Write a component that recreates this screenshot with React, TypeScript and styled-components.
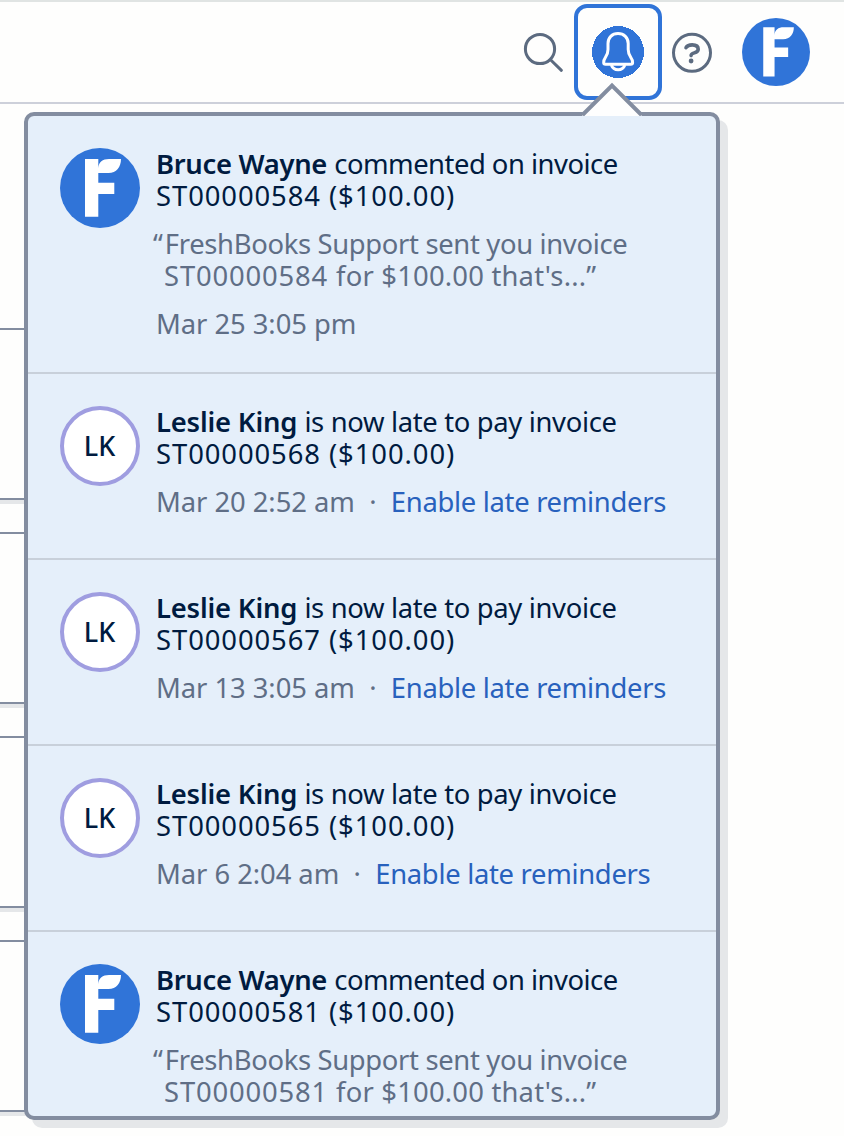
import React from "react";
import styled, { createGlobalStyle } from "styled-components";

const GlobalStyle = createGlobalStyle`
  * { box-sizing: border-box; }
  html, body { margin: 0; padding: 0; }
  body {
    background: #fefefd;
    color: #001b40;
    font-family: "Noto Sans", "Open Sans", sans-serif;
    overflow: hidden;
  }
`;

const Page = styled.div`
  position: relative;
  width: 844px;
  height: 1136px;
  overflow: hidden;
`;

const Header = styled.header`
  display: flex;
  align-items: center;
  justify-content: flex-end;
  height: 104px;
  padding-right: 34px;
  border-top: 2px solid #e0e4e3;
  border-bottom: 2px solid #cdd0da;
`;

const IconButton = styled.button`
  display: flex;
  width: 40px;
  height: 40px;
  padding: 0;
  border: 0;
  background: none;
  color: #5c6b80;

  svg {
    overflow: visible;
  }
`;

const BellButton = styled.button`
  display: flex;
  align-items: center;
  justify-content: center;
  width: 88px;
  height: 96px;
  margin: 0 10px;
  padding: 0;
  border: 4px solid #3074d8;
  border-radius: 13px;
  background: #fefefd;
`;

const AccountButton = styled(IconButton)`
  width: 68px;
  height: 68px;
  margin-left: 30px;
`;

const CardColumn = styled.main`
  display: flex;
  flex-direction: column;
  gap: 32px;
  width: 100px;
  margin-left: -60px;
  padding-top: 224px;
`;

const Card = styled.section`
  height: 172px;
  border: 2px solid #838da0;
  border-radius: 8px;
  box-shadow: 0 4px 0 #e5e7e9;
`;

const Popover = styled.aside`
  position: absolute;
  top: 112px;
  left: 24px;
  width: 696px;
  height: 1008px;
  border: 4px solid #838da0;
  border-radius: 10px;
  background: #e5effa;
  box-shadow: 8px 8px 0 #e5e7e9;
`;

const Caret = styled.svg`
  position: absolute;
  top: -34px;
  left: 553px;
`;

const List = styled.ul`
  height: 100%;
  margin: 0;
  padding: 0;
  overflow: hidden;
  border-radius: 6px;
  list-style: none;
`;

const Item = styled.li`
  display: flex;
  gap: 16px;
  min-height: 186px;
  padding: 32px 0 32px 32px;
  border-bottom: 2px solid #c8d0da;
`;

const Initials = styled.div`
  display: flex;
  flex: none;
  align-items: center;
  justify-content: center;
  width: 80px;
  height: 80px;
  padding: 0 1px 2px 0;
  border: 4px solid #9f9de0;
  border-radius: 50%;
  background: #fff;
  font-size: 27px;
  font-weight: 500;
`;

const Body = styled.div`
  display: flex;
  flex-direction: column;
  gap: 16px;
  font-size: 27.4px;
  line-height: 32px;
  white-space: nowrap;
`;

const Run = styled.span<{ $track?: number }>`
  letter-spacing: ${(p) => p.$track ?? 0}px;
`;

const Name = styled(Run)`
  font-weight: 600;
`;

const Line = styled.div`
  height: 32px;
`;

const Quote = styled.div`
  margin-left: -3px;
  color: #5f6e86;
`;

const QuoteEnd = styled(Line)`
  padding-left: 11px;
`;

const Meta = styled.div`
  display: flex;
  height: 32px;
  color: #5f6e86;
`;

const Dot = styled.span`
  width: 36px;
  text-align: center;
`;

const Link = styled.a<{ $track?: number }>`
  color: #2861bd;
  letter-spacing: ${(p) => p.$track ?? 0}px;
`;

const LogoSvg = styled.svg`
  flex: none;
`;

const Logo = ({ size }: { size: number }) => (
  <LogoSvg width={size} height={size} viewBox="0 0 80 80">
    <circle cx="40" cy="40" r="40" fill="#3074d8" />
    <path
      fill="#fff"
      d="M25 11H38.3V20C38.8 14 42.5 11 49 11H61C61 19 56.5 25 48.5 25H38.3V34.7H54.3V46H38.3V68.7H25Z"
    />
  </LogoSvg>
);

const SearchIcon = () => (
  <svg width="40" height="40" viewBox="0 0 40 40" fill="none" stroke="currentColor" strokeWidth="3" strokeLinecap="round">
    <circle cx="16" cy="17" r="14.6" />
    <path d="M26.8 28L37.4 38.3" />
  </svg>
);

const BellIcon = () => (
  <svg width="52" height="52" viewBox="0 0 52 52" fill="none" stroke="#fff" strokeWidth="3" strokeLinejoin="round">
    <circle cx="26" cy="26" r="26" fill="#3074d8" stroke="none" shapeRendering="crispEdges" />
    <path d="M26 7.6C20 7.6 16 11.7 16 17.5V23.5C16 27.5 14.8 29.6 13.3 31.6C12 33.4 11.7 34.8 11.7 36.5C11.7 37.7 12.3 38.3 13.5 38.3H38.7C39.9 38.3 40.6 37.7 40.6 36.5C40.6 34.8 40.2 33.4 38.9 31.6C37.4 29.6 36.2 27.5 36.2 23.5V17.5C36.2 11.7 32 7.6 26 7.6Z" />
    <path d="M19.3 39C20.5 42.2 22.8 43.8 26.1 43.8C29.4 43.8 31.7 42.2 32.9 39" />
  </svg>
);

const HelpIcon = () => (
  <svg width="40" height="40" viewBox="0 0 40 40" fill="none" stroke="currentColor" strokeWidth="3" strokeLinecap="round">
    <circle cx="20" cy="20.8" r="18.5" />
    <path strokeWidth="3.6" d="M14 15.6C15.1 13.7 17.2 12.9 20.2 12.9C24 12.9 26.2 14.6 26.2 17.2C26.2 21.6 19.1 20.2 19.1 23.6" />
    <circle cx="19.1" cy="29" r="2.4" fill="currentColor" stroke="none" />
  </svg>
);

const InvoiceLine = ({ invoice }: { invoice: string }) => (
  <Line>
    <Run $track={0.93}>{invoice} ($100.00)</Run>
  </Line>
);

interface CommentProps {
  invoice: string;
  date?: string;
}

const CommentItem = ({ invoice, date }: CommentProps) => (
  <Item>
    <Logo size={80} />
    <Body>
      <div>
        <Line>
          <Name $track={-0.3}>Bruce Wayne</Name> <Run $track={-0.5}>commented on invoice</Run>
        </Line>
        <InvoiceLine invoice={invoice} />
      </div>
      <Quote>
        <Line>
          <Run $track={2}>“</Run>
          <Run $track={-0.33}>FreshBooks Support sent you invoice</Run>
        </Line>
        <QuoteEnd>
          <Run $track={0.85}>{invoice} </Run>
          <Run $track={0.2}>for $100.00 that's...”</Run>
        </QuoteEnd>
      </Quote>
      {date && (
        <Meta>
          <Run $track={-0.05}>{date}</Run>
        </Meta>
      )}
    </Body>
  </Item>
);

interface LateProps {
  invoice: string;
  date: string;
}

const LateItem = ({ invoice, date }: LateProps) => (
  <Item>
    <Initials>LK</Initials>
    <Body>
      <div>
        <Line>
          <Name $track={-0.18}>Leslie King</Name> <Run $track={-0.33}>is now late to pay invoice</Run>
        </Line>
        <InvoiceLine invoice={invoice} />
      </div>
      <Meta>
        <Run $track={-0.05}>{date}</Run>
        <Dot>·</Dot>
        <Link $track={-0.3}>Enable late reminders</Link>
      </Meta>
    </Body>
  </Item>
);

export default function App() {
  return (
    <Page>
      <GlobalStyle />
      <Header>
        <IconButton aria-label="Search">
          <SearchIcon />
        </IconButton>
        <BellButton aria-label="Notifications">
          <BellIcon />
        </BellButton>
        <IconButton aria-label="Help">
          <HelpIcon />
        </IconButton>
        <AccountButton aria-label="Account">
          <Logo size={68} />
        </AccountButton>
      </Header>
      <CardColumn>
        <Card />
        <Card />
        <Card />
        <Card />
      </CardColumn>
      <Popover>
        <Caret width="62" height="34" viewBox="0 0 62 34">
          <path d="M1.5 34V33L31 3.5L60.5 33V34Z" fill="#fefefe" />
          <path d="M1.5 33L31 3.5L60.5 33" fill="none" stroke="#838da0" strokeWidth="4" />
        </Caret>
        <List>
          <CommentItem invoice="ST00000584" date="Mar 25 3:05 pm" />
          <LateItem invoice="ST00000568" date="Mar 20 2:52 am" />
          <LateItem invoice="ST00000567" date="Mar 13 3:05 am" />
          <LateItem invoice="ST00000565" date="Mar 6 2:04 am" />
          <CommentItem invoice="ST00000581" />
        </List>
      </Popover>
    </Page>
  );
}
